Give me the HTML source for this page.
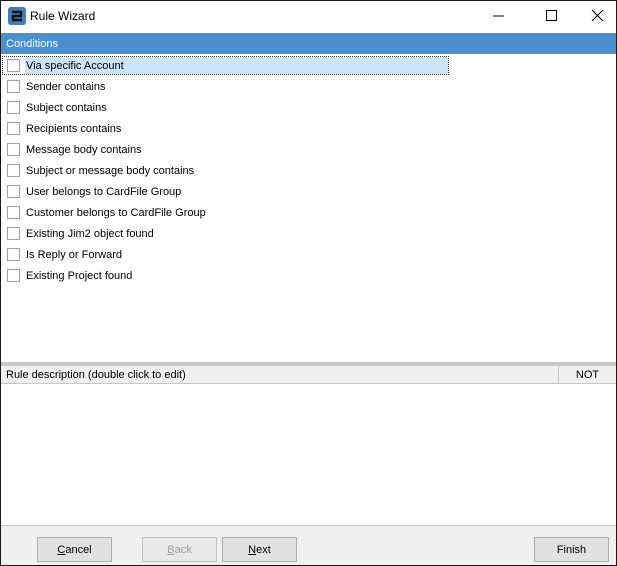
<!DOCTYPE html>
<html><head><style>
*{margin:0;padding:0;box-sizing:border-box}
body{width:617px;height:566px;overflow:hidden;font-family:"Liberation Sans",sans-serif;font-size:11px;color:#000;background:#fff}
.win{position:absolute;left:0;top:0;width:617px;height:566px;border:1px solid #1a1a1a}
.title{position:absolute;left:0;top:0;width:615px;height:31px;background:#fff}
.title span{position:absolute;left:29px;top:8px;font-size:12px}
.hdr{position:absolute;left:0;top:32px;width:615px;height:21px;background:#4a8fd0;color:#fff;padding:5px 0 0 5px;font-size:11px}
.row{position:absolute;left:0;height:21px;width:615px}
.cb{position:absolute;left:6px;top:4px;width:13px;height:13px;border:1px solid #a0a0a0;background:#fff}
.row span{position:absolute;left:25px;top:5px}
.sel{position:absolute;left:1px;top:1px;width:447px;height:19px;border:1px dotted #333}
.selbg{position:absolute;left:24px;top:2px;width:423px;height:17px;background:#cce4f7}
.split{position:absolute;left:0;top:361px;width:615px;height:4px;background:#c8c8c8}
.dh{position:absolute;left:0;top:365px;width:615px;height:18px;background:#f0f0f0;border-bottom:1px solid #c8c8c8}
.dh span{position:absolute;left:5px;top:3px}
.dh .not{position:absolute;left:557px;top:0;width:58px;height:17px;border-left:1px solid #c8c8c8;text-align:center;padding-top:3px}
.bot{position:absolute;left:0;top:524px;width:615px;height:40px;background:#f0f0f0;border-top:1px solid #c8c8c8}
.btn{position:absolute;top:11px;width:75px;height:25px;border:1px solid #adadad;background:#e1e1e1;text-align:center;padding-top:6px;font-size:11px}
.dis{color:#a0a0a0;border-color:#bfbfbf;background:#e8e8e8}
</style></head><body><div class="win">
<div class="title">
<svg style="position:absolute;left:7px;top:6px" width="18" height="18" viewBox="0 0 18 18"><rect x="0" y="0" width="18" height="18" rx="3" fill="#3d7fc1"/><path d="M4 5h9v4H5v4h9" stroke="#111" stroke-width="2.4" fill="none"/></svg>
<span>Rule Wizard</span>
<svg style="position:absolute;left:491px;top:8px" width="120" height="14" viewBox="0 0 120 14"><path d="M1 7h11" stroke="#000"/><path d="M54.5 1.5h10v10h-10z" stroke="#000" fill="none"/><path d="M100 1l11 11M111 1l-11 11" stroke="#000"/></svg>
</div>
<div class="hdr">Conditions</div>
<div class="row" style="top:54px"><div class="selbg"></div><div class="sel"></div><div class="cb"></div><span>Via specific Account</span></div>
<div class="row" style="top:75px"><div class="cb"></div><span>Sender contains</span></div>
<div class="row" style="top:96px"><div class="cb"></div><span>Subject contains</span></div>
<div class="row" style="top:117px"><div class="cb"></div><span>Recipients contains</span></div>
<div class="row" style="top:138px"><div class="cb"></div><span>Message body contains</span></div>
<div class="row" style="top:159px"><div class="cb"></div><span>Subject or message body contains</span></div>
<div class="row" style="top:180px"><div class="cb"></div><span>User belongs to CardFile Group</span></div>
<div class="row" style="top:201px"><div class="cb"></div><span>Customer belongs to CardFile Group</span></div>
<div class="row" style="top:222px"><div class="cb"></div><span>Existing Jim2 object found</span></div>
<div class="row" style="top:243px"><div class="cb"></div><span>Is Reply or Forward</span></div>
<div class="row" style="top:264px"><div class="cb"></div><span>Existing Project found</span></div>
<div class="split"></div>
<div class="dh"><span>Rule description (double click to edit)</span><div class="not">NOT</div></div>
<div class="bot">
<div class="btn" style="left:36px"><u>C</u>ancel</div>
<div class="btn dis" style="left:141px"><u>B</u>ack</div>
<div class="btn" style="left:221px"><u>N</u>ext</div>
<div class="btn" style="left:533px">Finish</div>
</div>
</div></body></html>
